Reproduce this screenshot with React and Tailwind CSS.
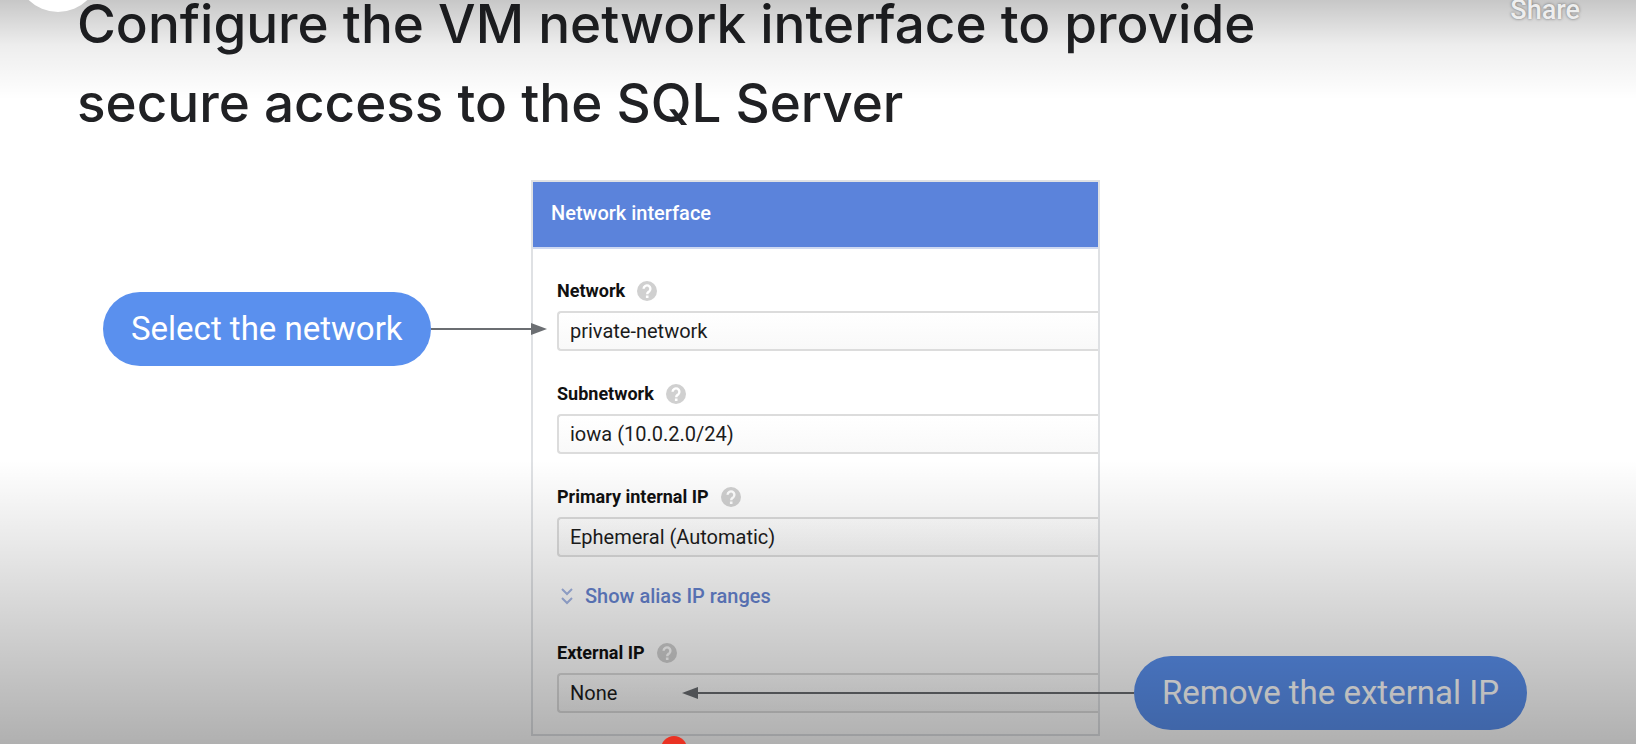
import { useId } from "react";

function HelpIcon() {
  return (
    <svg viewBox="0 0 20 20" className="size-5 shrink-0" aria-hidden="true">
      <circle cx="10" cy="10" r="10" fill="#d0d0d0" />
      <path
        d="M6.6 7.7a3.4 3.4 0 1 1 5.7 2.6c-1.3 1.1-2.1 1.4-2.1 3"
        fill="none"
        stroke="#fff"
        strokeWidth="2.4"
      />
      <rect x="8.9" y="14.5" width="2.6" height="2.5" fill="#fff" />
    </svg>
  );
}

function Field({ label, value }) {
  const id = useId();
  return (
    <div className="flex flex-col gap-[10px]">
      <div className="flex h-5 items-center gap-3">
        <label htmlFor={id} className="text-[18px] leading-5 font-bold text-[#111]">
          {label}
        </label>
        <HelpIcon />
      </div>
      <select
        id={id}
        className="h-10 w-full appearance-none rounded-l-[4px] border-2 border-r-0 border-[#dcdcdc] bg-linear-to-b from-white to-[#f9f9f9] px-[11px] text-[20px] leading-6 text-[#1c1c1c]"
      >
        <option>{value}</option>
      </select>
    </div>
  );
}

function Callout({ children }) {
  return (
    <p className="flex h-[74px] shrink-0 items-center rounded-full bg-[#5a90ee] px-7 text-[33px] whitespace-nowrap text-white">
      {children}
    </p>
  );
}

function ArrowHead({ left }) {
  return (
    <svg viewBox="0 0 16 12" className="h-3 w-4 shrink-0" aria-hidden="true">
      <path d={left ? "M0 6 16 0v12z" : "M16 6 0 0v12z"} fill="#6b6e72" />
    </svg>
  );
}

export default function App() {
  return (
    <main className="relative min-h-screen overflow-hidden bg-white pb-[7px] font-[Roboto,sans-serif]">
      <h1 className="-mt-[15px] ml-[77px] font-[Inter,sans-serif] text-[53px] leading-[79px] font-medium text-[#202124]">
        Configure the VM network interface to provide
        <br />
        secure access to the SQL Server
      </h1>

      <section className="mt-[37px] grid grid-cols-[428fr_569fr_427fr] pr-[109px] pl-[103px]">
        <div className="relative z-10 -mr-4 flex items-center self-start pt-28">
          <Callout>Select the network</Callout>
          <span className="h-[2px] flex-1 bg-[#6b6e72]" />
          <ArrowHead />
        </div>

        <div className="min-w-0 border-2 border-[#dfe1e4] pb-[21px]">
          <h2 className="flex h-[67px] items-center border-b-2 border-[#cfd9f1] bg-[#5b83db] px-[18px] pb-[4px] text-[20px] font-medium text-white">
            Network interface
          </h2>
          <form className="flex flex-col gap-[33px] pt-8 pl-6">
            <Field label="Network" value="private-network" />
            <Field label="Subnetwork" value="iowa (10.0.2.0/24)" />
            <Field label="Primary internal IP" value="Ephemeral (Automatic)" />
            <button
              type="button"
              className="-mt-1 mb-1 flex h-5 items-center gap-3 pl-1 text-[20px] font-medium text-[#6583cf]"
            >
              <svg
                viewBox="0 0 12 18"
                className="h-[18px] w-3"
                fill="none"
                stroke="#a3b5e3"
                strokeWidth="2"
                aria-hidden="true"
              >
                <path d="m1 2 5 5 5-5M1 11l5 5 5-5" />
              </svg>
              Show alias IP ranges
            </button>
            <Field label="External IP" value="None" />
          </form>
        </div>

        <div className="relative z-10 -ml-[98%] flex items-center self-end pb-[6px]">
          <ArrowHead left />
          <span className="h-[2px] flex-1 bg-[#6b6e72]" />
          <Callout>Remove the external IP</Callout>
        </div>
      </section>

      <div className="pointer-events-none absolute inset-x-0 top-0 z-20 h-[100px] bg-linear-to-b from-black/22 via-black/7 via-45% to-transparent" />
      <div className="pointer-events-none absolute inset-x-0 bottom-0 z-20 h-[284px] bg-linear-to-t from-black/31 via-black/9 via-70% to-transparent" />

      <span className="absolute -top-[72px] left-4 z-30 size-[84px] rounded-full bg-white" />
      <button
        type="button"
        className="absolute -top-[6px] right-14 z-30 text-[27px] leading-8 font-medium text-[#eee] text-shadow-[0_0_3px_#00000080]"
      >
        Share
      </button>
      <span className="absolute -bottom-[18px] left-[661px] z-30 size-[26px] rounded-full bg-[#ea3223]" />
    </main>
  );
}
